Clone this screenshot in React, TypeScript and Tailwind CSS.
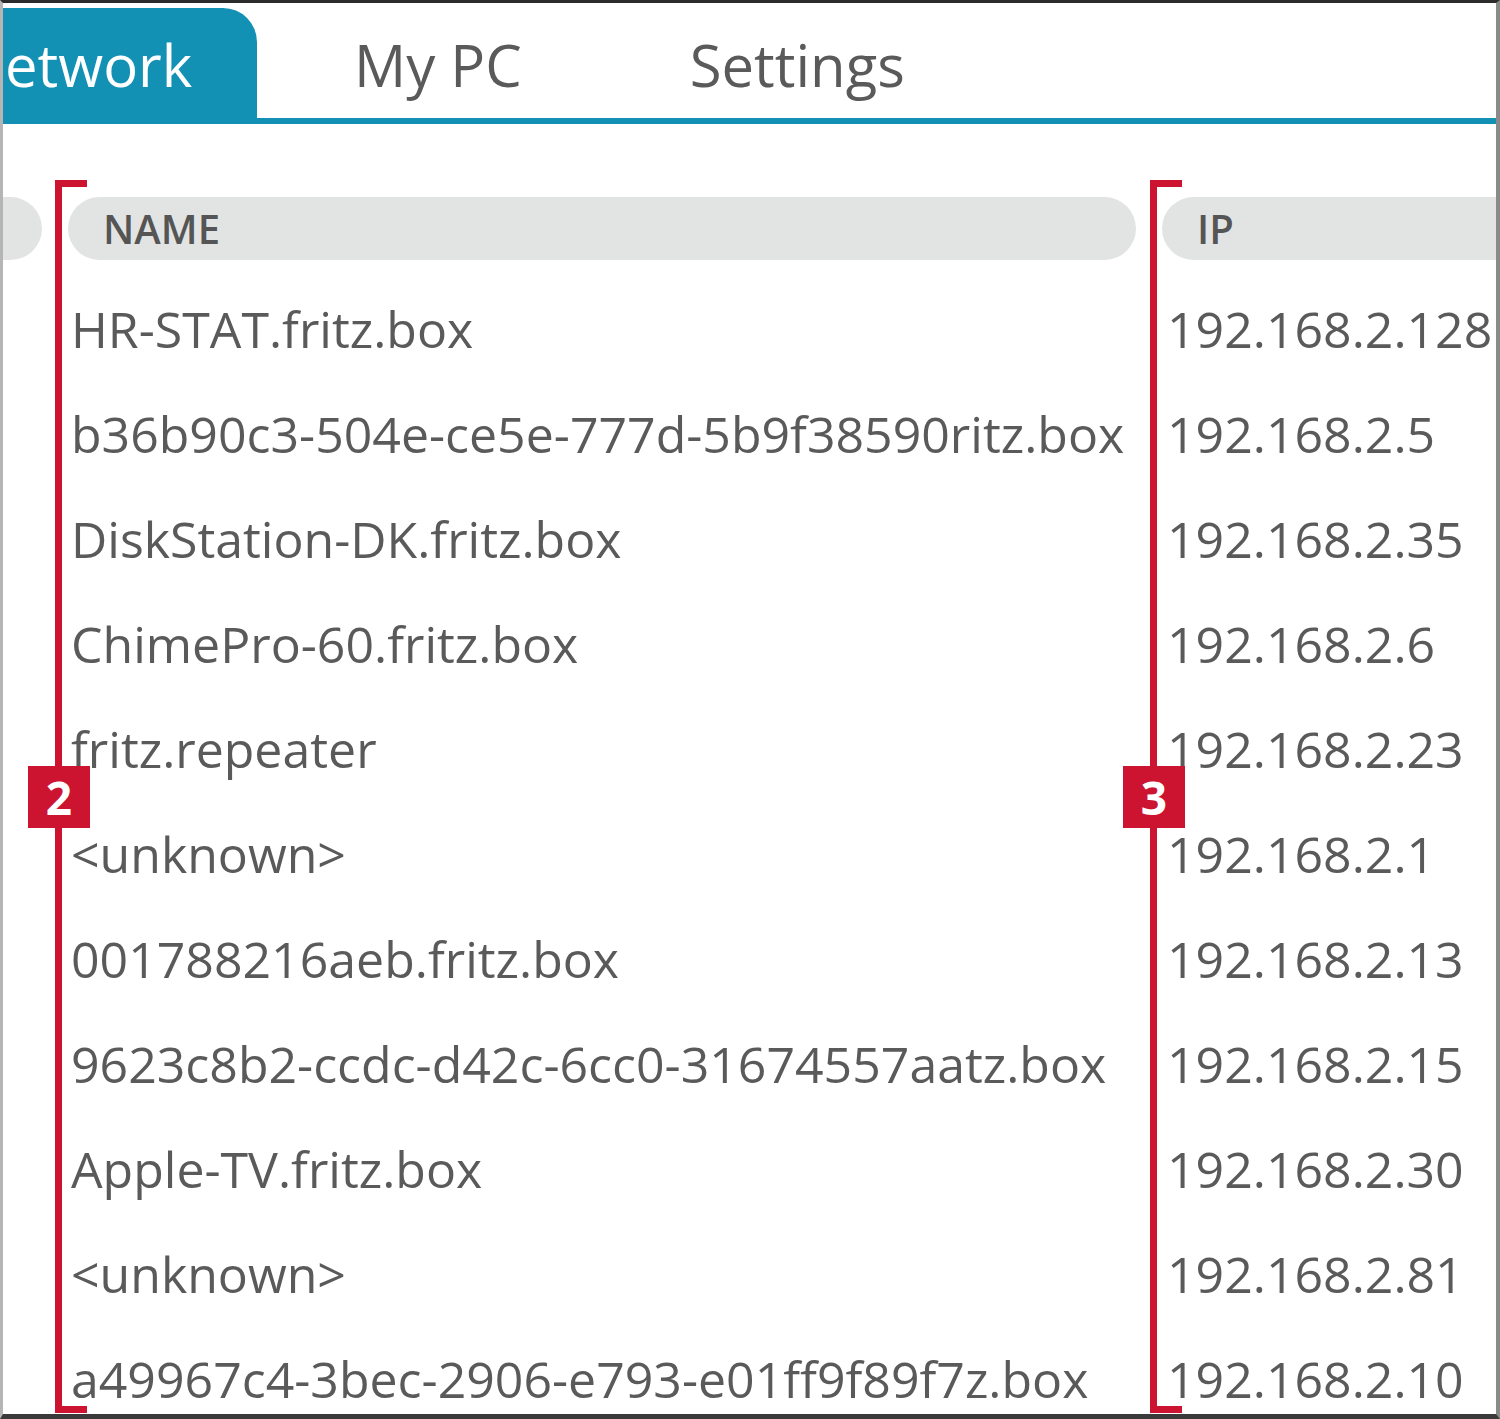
import React from 'react';

const rows: { name: string; ip: string }[] = [
  { name: 'HR-STAT.fritz.box', ip: '192.168.2.128' },
  { name: 'b36b90c3-504e-ce5e-777d-5b9f38590ritz.box', ip: '192.168.2.5' },
  { name: 'DiskStation-DK.fritz.box', ip: '192.168.2.35' },
  { name: 'ChimePro-60.fritz.box', ip: '192.168.2.6' },
  { name: 'fritz.repeater', ip: '192.168.2.23' },
  { name: '<unknown>', ip: '192.168.2.1' },
  { name: '001788216aeb.fritz.box', ip: '192.168.2.13' },
  { name: '9623c8b2-ccdc-d42c-6cc0-31674557aatz.box', ip: '192.168.2.15' },
  { name: 'Apple-TV.fritz.box', ip: '192.168.2.30' },
  { name: '<unknown>', ip: '192.168.2.81' },
  { name: 'a49967c4-3bec-2906-e793-e01ff9f89f7z.box', ip: '192.168.2.10' },
];

const Bracket: React.FC<{ left: number; label: string }> = ({ left, label }) => (
  <div className="absolute top-[177px] h-[1233px] w-[32px]" style={{ left }}>
    <div className="absolute left-0 top-0 h-full w-[7px] bg-[#cc1430]" />
    <div className="absolute left-0 top-0 h-[7px] w-full bg-[#cc1430]" />
    <div className="absolute left-0 bottom-0 h-[7px] w-full bg-[#cc1430]" />
    <div className="absolute left-[-27px] top-[586px] w-[62px] h-[62px] bg-[#cc1430] flex items-center justify-center text-white font-bold text-[46px] leading-none">
      {label}
    </div>
  </div>
);

const App: React.FC = () => {
  return (
    <div
      className="w-[1500px] h-[1419px] relative overflow-hidden bg-white border-t-[3px] border-t-[#2b2b2b] border-l-[3px] border-l-[#b5b5b5] border-r-[4px] border-r-[#8a8a8a] border-b-[5px] border-b-[#3a3a3a] text-[#5a5a5a]"
      style={{ fontFamily: '"Open Sans", "Noto Sans", sans-serif' }}
    >
      {/* Tabs */}
      <div className="flex items-end h-[121px] border-b-[6px] border-[#1391b4]">
        <div className="w-[257px] h-[110px] bg-[#1391b4] rounded-tr-[34px] flex items-center -ml-[3px] pl-[5px]">
          <span className="text-white text-[58px] leading-none whitespace-nowrap pt-[4px]">etwork</span>
        </div>
        <div className="h-[110px] flex items-center pl-[97px] pt-[4px]">
          <span className="text-[58px] leading-none">My PC</span>
        </div>
        <div className="h-[110px] flex items-center pl-[168px] pt-[4px]">
          <span className="text-[58px] leading-none">Settings</span>
        </div>
      </div>

      {/* Table */}
      <div className="pt-[73px]">
        <div className="grid grid-cols-[42px_1068px_1fr] gap-x-[26px] -ml-[3px]">
          <div className="h-[63px] bg-[#e2e4e3] rounded-r-full" />
          <div className="h-[63px] bg-[#e2e4e3] rounded-full flex items-center pl-[35px]">
            <span className="text-[40px] font-semibold text-[#555]">NAME</span>
          </div>
          <div className="h-[63px] bg-[#e2e4e3] rounded-l-full flex items-center pl-[35px]">
            <span className="text-[40px] font-semibold text-[#555]">IP</span>
          </div>
        </div>

        <div className="mt-[17px]">
          {rows.map((r, i) => (
            <div key={i} className="grid grid-cols-[42px_1068px_1fr] gap-x-[26px] -ml-[3px] h-[105px] items-center">
              <div />
              <div className="pl-[3px] text-[50px] whitespace-nowrap">{r.name}</div>
              <div className="pl-[5px] text-[50px] whitespace-nowrap">{r.ip}</div>
            </div>
          ))}
        </div>
      </div>

      {/* Annotation brackets */}
      <Bracket left={52} label="2" />
      <Bracket left={1147} label="3" />
    </div>
  );
};

export default App;
